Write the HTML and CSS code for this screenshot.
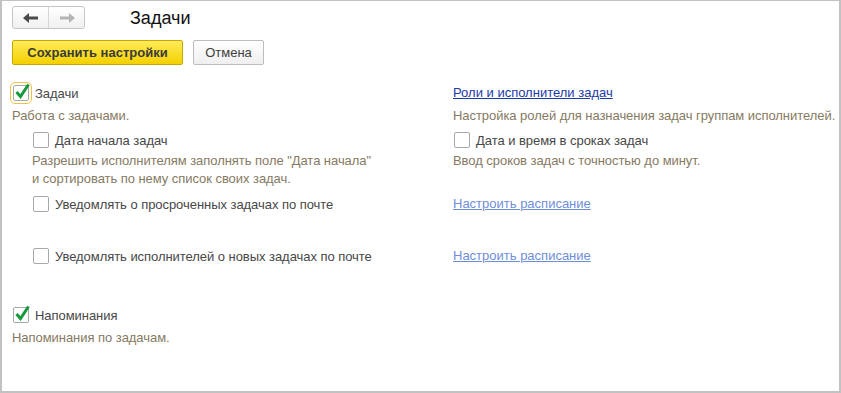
FILE: index.html
```html
<!DOCTYPE html>
<html lang="ru">
<head>
    <meta charset="UTF-8">
    <title>Задачи</title>
    <link rel="stylesheet" href="styles.css">
</head>
<body>
    <div class="window">
        <!-- header: navigation and title -->
        <div class="header">
            <div class="nav">
                <span class="nav-btn">
                    <svg width="16" height="10" viewBox="0 0 16 10"><path d="M0 5 L6 0 L6 3.5 L15 3.5 L15 6.5 L6 6.5 L6 10 Z" fill="#4a4a4a"/></svg>
                </span>
                <span class="nav-btn">
                    <svg width="16" height="10" viewBox="0 0 16 10"><path d="M16 5 L10 0 L10 3.5 L1 3.5 L1 6.5 L10 6.5 L10 10 Z" fill="#b4b4b4"/></svg>
                </span>
            </div>
            <div class="title">Задачи</div>
        </div>

        <div class="toolbar">
            <button class="btn btn-primary">Сохранить настройки</button>
            <button class="btn">Отмена</button>
        </div>

        <div class="settings">
            <label class="option r1">
                <span class="box focused">
                    <svg class="check" width="16" height="16" viewBox="0 0 16 16"><path d="M2.5 8 L6.5 12.5 L14.5 0.5" fill="none" stroke="#16993a" stroke-width="3"/></svg>
                </span>
                Задачи
            </label>
            <a href="#" class="link r1">Роли и исполнители задач</a>

            <div class="hint r2">Работа с задачами.</div>
            <div class="hint r2">Настройка ролей для назначения задач группам исполнителей.</div>

            <label class="option indent r3"><span class="box"></span>Дата начала задач</label>
            <label class="option r3"><span class="box"></span>Дата и время в сроках задач</label>

            <div class="hint indent r4">Разрешить исполнителям заполнять поле "Дата начала"<br>и сортировать по нему список своих задач.</div>
            <div class="hint r4">Ввод сроков задач с точностью до минут.</div>

            <label class="option indent r5"><span class="box"></span>Уведомлять о просроченных задачах по почте</label>
            <a href="#" class="link link-muted r5">Настроить расписание</a>

            <label class="option indent r6"><span class="box"></span>Уведомлять исполнителей о новых задачах по почте</label>
            <a href="#" class="link link-muted r6">Настроить расписание</a>
        </div>

        <div class="reminders">
            <label class="option">
                <span class="box">
                    <svg class="check" width="16" height="16" viewBox="0 0 16 16"><path d="M2.5 8 L6.5 12.5 L14.5 0.5" fill="none" stroke="#16993a" stroke-width="3"/></svg>
                </span>
                Напоминания
            </label>
            <div class="hint">Напоминания по задачам.</div>
        </div>
    </div>
</body>
</html>
```

FILE: styles.css
```css
* {
    box-sizing: border-box;
    margin: 0;
    padding: 0;
}

body {
    font-family: "Liberation Sans", Arial, sans-serif;
    font-size: 13px;
    color: #474747;
    background-color: white;
}

.window {
    height: 100vh;
    border: 2px solid #c2c2c2;
    border-top-width: 1px;
    padding: 5px 10px 0 10px;
}

.header {
    display: flex;
    align-items: center;
    height: 23px;
}

.nav {
    display: flex;
    width: 73px;
    height: 23px;
    border: 1px solid #c6c6c6;
    border-radius: 3px;
    background: linear-gradient(#ffffff, #f0f0f0);
}

.nav-btn {
    flex: 1;
    display: flex;
    align-items: center;
    justify-content: center;
}

.nav-btn + .nav-btn {
    border-left: 1px solid #d6d6d6;
}

.title {
    margin-left: 45px;
    font-size: 18px;
    color: #111;
    margin-top: 2px;
}

.toolbar {
    display: flex;
    gap: 10px;
    margin-top: 11px;
}

.btn {
    font-family: inherit;
    font-size: 13px;
    color: #404040;
    height: 25px;
    width: 71px;
    border: 1px solid #bdbdbd;
    border-radius: 2px;
    background: linear-gradient(#ffffff, #efefef);
}

.btn-primary {
    width: 171px;
    font-weight: bold;
    color: #3a3a3a;
    border-color: #c9a900;
    background: linear-gradient(#ffec5a, #f4d000);
}

.settings {
    display: grid;
    grid-template-columns: 441px 1fr;
    margin-top: 18px;
    align-items: start;
}

.option {
    display: flex;
    align-items: center;
    height: 20px;
    gap: 6px;
    letter-spacing: -0.05px;
}

.box {
    position: relative;
    width: 16px;
    height: 16px;
    margin-left: 1px;
    border: 1px solid #a8a8a8;
    border-radius: 2px;
    background: white;
    flex-shrink: 0;
}

.box.focused {
    outline: 1px solid #f2c343;
    outline-offset: 2px;
}

.check {
    position: absolute;
    left: 0;
    top: -2px;
    overflow: visible;
}

.indent {
    margin-left: 20px;
}

.hint {
    color: #867a62;
    line-height: 18px;
    white-space: nowrap;
    letter-spacing: -0.05px;
}

.link {
    display: block;
    line-height: 20px;
    color: #1c3aa6;
    text-decoration: underline;
}

.link-muted {
    color: #6f8ed8;
}

.r2 { margin-top: 4px; }
.r3 { margin-top: 5px; }
.r4 { margin-top: 2px; }
.r5 { margin-top: 6px; }
.r6 { margin-top: 32px; }

.reminders {
    margin-top: 39px;
}

.reminders .hint {
    margin-top: 4px;
}
```
